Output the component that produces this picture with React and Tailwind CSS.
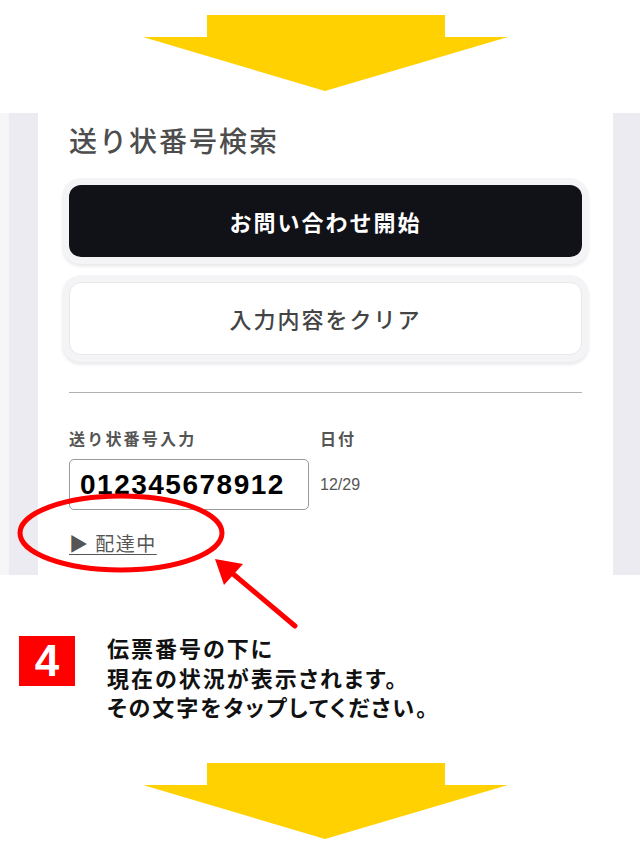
import React from "react";

const jp = { fontFamily: '"Noto Sans CJK JP", "Noto Sans", sans-serif' };
const latin = { fontFamily: '"Liberation Sans", Arial, sans-serif' };

function DownArrow({ className }) {
  return (
    <svg width="640" height="106" viewBox="0 0 640 106" className={className}>
      <polygon
        points="207,15 445,15 445,37 508,37 325,91 143,37 207,37"
        fill="#ffd100"
      />
    </svg>
  );
}

function PhoneMock() {
  return (
    <div className="flex h-[462px] w-full">
      <div className="flex w-[38px]">
        <div className="w-[9px] bg-[#f6f6f8]" />
        <div className="flex-1 bg-[#ecebf1]" />
      </div>
      <div className="flex flex-1 flex-col bg-white px-[31px]">
        <h1 className="mt-[9px] text-[28px] leading-[36px] font-medium tracking-[2px] text-[#4d4d4d]">
          送り状番号検索
        </h1>
        <button className="mt-[27px] flex h-[72px] items-center justify-center rounded-[12px] bg-[#111118] text-[22px] font-bold tracking-[2px] text-white shadow-[0_0_0_7px_#f4f4f6,0_3px_3px_7px_#ececee]">
          お問い合わせ開始
        </button>
        <button className="mt-[25px] flex h-[73px] items-center justify-center rounded-[12px] border border-[#e8e8ea] bg-white text-[22px] font-medium tracking-[2px] text-[#444] shadow-[0_0_0_7px_#f4f4f6,0_3px_3px_7px_#ececee]">
          入力内容をクリア
        </button>
        <div className="mt-[37px] h-px bg-[#b0b0b0]" />
        <div className="mt-[34px] flex">
          <div className="flex w-[251px] flex-col">
            <span className="text-[16px] leading-[22px] font-bold tracking-[2.2px] text-[#555]">
              送り状番号入力
            </span>
            <div className="mt-[10px] flex h-[51px] w-[240px] items-center rounded-[5px] border border-[#9a9a9a] pl-[10px]">
              <span className="text-[28px] font-bold tracking-[1.5px] text-black" style={latin}>
                012345678912
              </span>
            </div>
            <a className="mt-[21px] text-[19px] leading-[24px] tracking-[1.5px] text-[#555] underline underline-offset-[3px]">
              ▶ 配達中
            </a>
          </div>
          <div className="flex flex-col">
            <span className="text-[16px] leading-[22px] font-bold tracking-[2px] text-[#555]">
              日付
            </span>
            <span className="mt-[24px] text-[16px] text-[#555]" style={latin}>
              12/29
            </span>
          </div>
        </div>
      </div>
      <div className="w-[27px] bg-[#ecebf1]" />
    </div>
  );
}

export default function App() {
  return (
    <div className="relative h-[854px] w-[640px] overflow-hidden bg-white" style={jp}>
      <div className="h-[113px]">
        <DownArrow />
      </div>
      <PhoneMock />
      <div className="flex pt-[61px]">
        <div className="ml-[19px] flex h-[50px] w-[56px] items-center justify-center bg-[#ff0000]">
          <span className="text-[44px] leading-none font-bold text-white" style={latin}>
            4
          </span>
        </div>
        <p
          className="mt-[-3px] ml-[32px] text-[22px] leading-[29.5px] font-bold tracking-[2px] text-[#111]"
          style={{ fontFeatureSettings: '"palt"' }}
        >
          伝票番号の下に
          <br />
          現在の状況が表示されます。
          <br />
          その文字をタップしてください。
        </p>
      </div>
      <div className="absolute top-[748px] left-0">
        <DownArrow />
      </div>
      {/* red callout: ring around the status link and a pointer */}
      <svg
        className="pointer-events-none absolute top-0 left-0"
        width="640"
        height="854"
        viewBox="0 0 640 854"
      >
        <ellipse cx="121" cy="533" rx="101" ry="37" fill="none" stroke="#ff0000" strokeWidth="5" />
        <line x1="295" y1="626" x2="232" y2="573" stroke="#ff0000" strokeWidth="5" strokeLinecap="round" />
        <polygon points="215,559 243,564 224,585" fill="#ff0000" />
      </svg>
    </div>
  );
}
